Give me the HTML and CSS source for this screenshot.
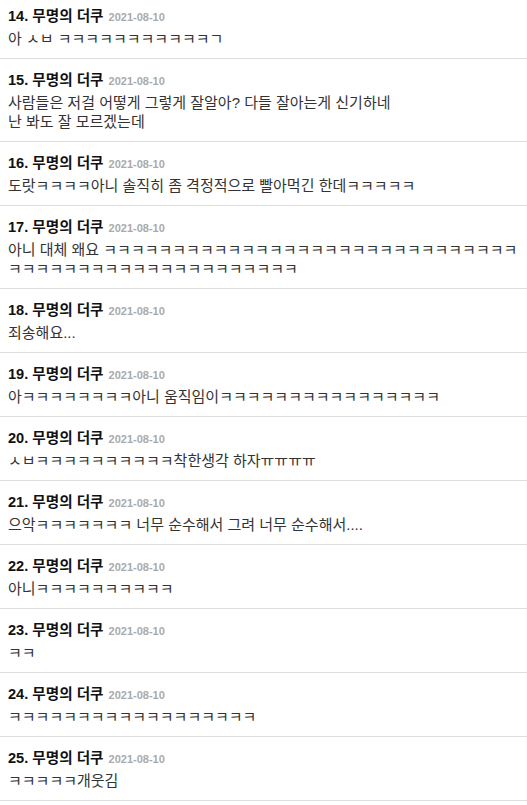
FILE: index.html
```html
<!DOCTYPE html>
<html lang="ko">

<head>
    <meta charset="UTF-8">
    <meta name="viewport" content="width=device-width, initial-scale=1.0">
    <title>댓글</title>
    <link rel="stylesheet" href="styles.css">
</head>

<body>
    <ul class="comments">
        <li class="comment">
            <div class="meta"><span class="name">14. 무명의 더쿠</span> <span class="date">2021-08-10</span></div>
            <div class="text">아 ㅅㅂ ㅋㅋㅋㅋㅋㅋㅋㅋㅋㅋㅋㄱ</div>
        </li>
        <li class="comment">
            <div class="meta"><span class="name">15. 무명의 더쿠</span> <span class="date">2021-08-10</span></div>
            <div class="text">사람들은 저걸 어떻게 그렇게 잘알아? 다들 잘아는게 신기하네<br>난 봐도 잘 모르겠는데</div>
        </li>
        <li class="comment">
            <div class="meta"><span class="name">16. 무명의 더쿠</span> <span class="date">2021-08-10</span></div>
            <div class="text">도랏ㅋㅋㅋㅋ아니 솔직히 좀 격정적으로 빨아먹긴 한데ㅋㅋㅋㅋㅋ</div>
        </li>
        <li class="comment">
            <div class="meta"><span class="name">17. 무명의 더쿠</span> <span class="date">2021-08-10</span></div>
            <div class="text">아니 대체 왜요 ㅋㅋㅋㅋㅋㅋㅋㅋㅋㅋㅋㅋㅋㅋㅋㅋㅋㅋㅋㅋㅋㅋㅋㅋㅋㅋㅋㅋㅋㅋㅋㅋㅋㅋㅋㅋㅋㅋㅋㅋㅋㅋㅋㅋㅋㅋㅋㅋㅋㅋㅋ</div>
        </li>
        <li class="comment">
            <div class="meta"><span class="name">18. 무명의 더쿠</span> <span class="date">2021-08-10</span></div>
            <div class="text">죄송해요...</div>
        </li>
        <li class="comment">
            <div class="meta"><span class="name">19. 무명의 더쿠</span> <span class="date">2021-08-10</span></div>
            <div class="text">아ㅋㅋㅋㅋㅋㅋㅋㅋ아니 움직임이ㅋㅋㅋㅋㅋㅋㅋㅋㅋㅋㅋㅋㅋㅋㅋㅋ</div>
        </li>
        <li class="comment">
            <div class="meta"><span class="name">20. 무명의 더쿠</span> <span class="date">2021-08-10</span></div>
            <div class="text">ㅅㅂㅋㅋㅋㅋㅋㅋㅋㅋㅋㅋ착한생각 하자ㅠㅠㅠㅠ</div>
        </li>
        <li class="comment">
            <div class="meta"><span class="name">21. 무명의 더쿠</span> <span class="date">2021-08-10</span></div>
            <div class="text">으악ㅋㅋㅋㅋㅋㅋㅋ 너무 순수해서 그려 너무 순수해서....</div>
        </li>
        <li class="comment">
            <div class="meta"><span class="name">22. 무명의 더쿠</span> <span class="date">2021-08-10</span></div>
            <div class="text">아니ㅋㅋㅋㅋㅋㅋㅋㅋㅋㅋ</div>
        </li>
        <li class="comment">
            <div class="meta"><span class="name">23. 무명의 더쿠</span> <span class="date">2021-08-10</span></div>
            <div class="text">ㅋㅋ</div>
        </li>
        <li class="comment">
            <div class="meta"><span class="name">24. 무명의 더쿠</span> <span class="date">2021-08-10</span></div>
            <div class="text">ㅋㅋㅋㅋㅋㅋㅋㅋㅋㅋㅋㅋㅋㅋㅋㅋㅋㅋ</div>
        </li>
        <li class="comment">
            <div class="meta"><span class="name">25. 무명의 더쿠</span> <span class="date">2021-08-10</span></div>
            <div class="text">ㅋㅋㅋㅋㅋ개웃김</div>
        </li>
    </ul>
</body>

</html>
```

FILE: styles.css
```css
body {
    margin: 0;
    font-family: "Liberation Sans", "Noto Sans CJK KR", sans-serif;
    color: #333;
    background: #fff;
}

.comments {
    list-style: none;
    margin: -5px 0 0;
    padding: 0;
}

.comment {
    padding: 11px 8px 10px;
    border-bottom: 1px solid #ddd;
}

.meta {
    display: flex;
    align-items: baseline;
    gap: 5px;
    height: 20px;
    line-height: 20px;
}

.name {
    font-size: 14.6px;
    font-weight: bold;
    color: #111;
}

.date {
    font-size: 11px;
    font-weight: bold;
    color: #aaa;
}

.text {
    margin-top: 3px;
    font-size: 15px;
    line-height: 19px;
    word-break: break-all;
}
```
